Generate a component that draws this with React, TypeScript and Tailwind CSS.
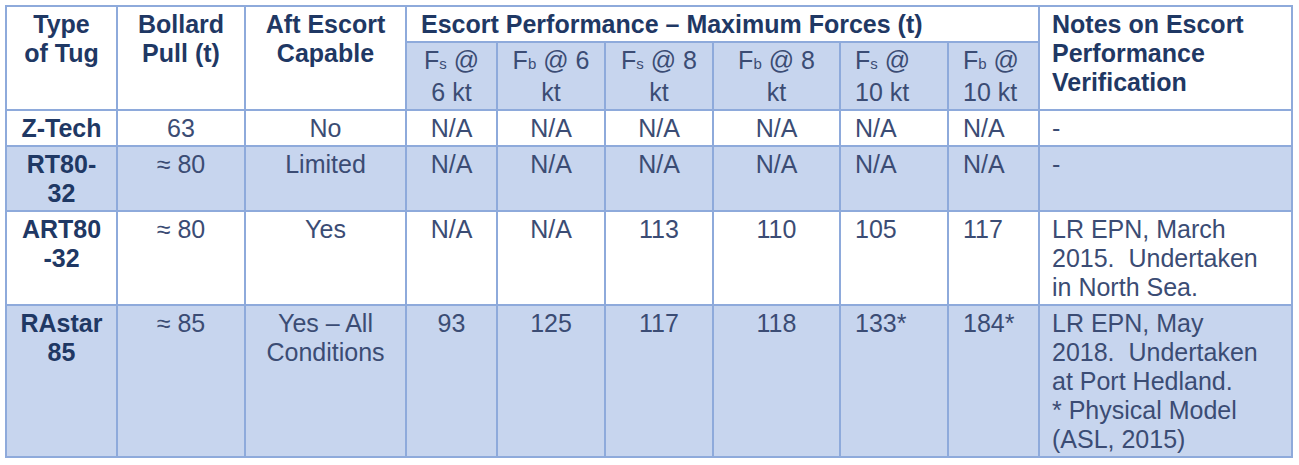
import React from 'react';

const border = 'border-2 border-[#8eaadb]';
const head = `${border} align-top px-2 pt-[3px] pb-[2px] font-bold text-[#1f3864]`;
const cell = `${border} align-top px-2 pt-[3px] pb-[2px] text-[#3b4c74]`;

function F({ sub, rest }: { sub: string; rest: React.ReactNode }) {
  return (
    <>
      F<span className="text-[15px]">{sub}</span> {rest}
    </>
  );
}

interface Row {
  tug: React.ReactNode;
  pull: string;
  aft: React.ReactNode;
  forces: string[];
  notes: React.ReactNode;
  shaded: boolean;
}

const rows: Row[] = [
  { tug: 'Z-Tech', pull: '63', aft: 'No', forces: ['N/A', 'N/A', 'N/A', 'N/A', 'N/A', 'N/A'], notes: '-', shaded: false },
  {
    tug: <>RT80-<br />32</>,
    pull: '≈ 80',
    aft: 'Limited',
    forces: ['N/A', 'N/A', 'N/A', 'N/A', 'N/A', 'N/A'],
    notes: '-',
    shaded: true,
  },
  {
    tug: <>ART80<br />-32</>,
    pull: '≈ 80',
    aft: 'Yes',
    forces: ['N/A', 'N/A', '113', '110', '105', '117'],
    notes: <>LR EPN, March<br />2015.{'\u00a0 '}Undertaken<br />in North Sea.</>,
    shaded: false,
  },
  {
    tug: <>RAstar<br />85</>,
    pull: '≈ 85',
    aft: <>Yes – All<br />Conditions</>,
    forces: ['93', '125', '117', '118', '133*', '184*'],
    notes: (
      <>
        LR EPN, May<br />2018.{'\u00a0 '}Undertaken<br />at Port Hedland.<br />* Physical Model<br />(ASL, 2015)
      </>
    ),
    shaded: true,
  },
];

export default function App() {
  return (
    <div className="w-[1299px] h-[465px] bg-white pt-[5px] pl-[5px] font-['Liberation_Sans',Arial,sans-serif] text-[25px] leading-[29px]">
      <table className="table-fixed border-collapse w-[1288px] border-2 border-[#8eaadb]">
        <colgroup>
          <col className="w-[111px]" />
          <col className="w-[128px]" />
          <col className="w-[161px]" />
          <col className="w-[91px]" />
          <col className="w-[108px]" />
          <col className="w-[108px]" />
          <col className="w-[127px]" />
          <col className="w-[108px]" />
          <col className="w-[91px]" />
          <col className="w-[253px]" />
        </colgroup>
        <thead>
          <tr className="bg-white h-[36px]">
            <th rowSpan={2} className={`${head} text-center`}>Type<br />of Tug</th>
            <th rowSpan={2} className={`${head} text-center`}>Bollard<br />Pull (t)</th>
            <th rowSpan={2} className={`${head} text-center`}>Aft Escort<br />Capable</th>
            <th colSpan={6} className={`${head} text-left pl-[14px]`}>
              Escort Performance – Maximum Forces (t)
            </th>
            <th rowSpan={2} className={`${head} text-left pl-[12px]`}>
              Notes on Escort<br />Performance<br />Verification
            </th>
          </tr>
          <tr className="bg-[#c7d5ee] h-[67px]">
            <th className={`${cell} font-normal text-center`}><F sub="s" rest="@" /><br />6 kt</th>
            <th className={`${cell} font-normal text-center`}><F sub="b" rest="@ 6" /><br />kt</th>
            <th className={`${cell} font-normal text-center`}><F sub="s" rest="@ 8" /><br />kt</th>
            <th className={`${cell} font-normal text-center`}><F sub="b" rest="@ 8" /><br />kt</th>
            <th className={`${cell} font-normal text-left pl-[14px]`}><F sub="s" rest="@" /><br />10 kt</th>
            <th className={`${cell} font-normal text-left pl-[14px]`}><F sub="b" rest="@" /><br />10 kt</th>
          </tr>
        </thead>
        <tbody>
          {rows.map((r, i) => (
            <tr key={i} className={r.shaded ? 'bg-[#c7d5ee]' : 'bg-white'}>
              <td className={`${head} text-center`}>{r.tug}</td>
              <td className={`${cell} text-center`}>{r.pull}</td>
              <td className={`${cell} text-center`}>{r.aft}</td>
              {r.forces.map((f, j) => (
                <td key={j} className={`${cell} ${j >= 4 ? 'text-left pl-[14px]' : 'text-center'}`}>{f}</td>
              ))}
              <td className={`${cell} text-left pl-[12px]`}>{r.notes}</td>
            </tr>
          ))}
        </tbody>
      </table>
    </div>
  );
}
